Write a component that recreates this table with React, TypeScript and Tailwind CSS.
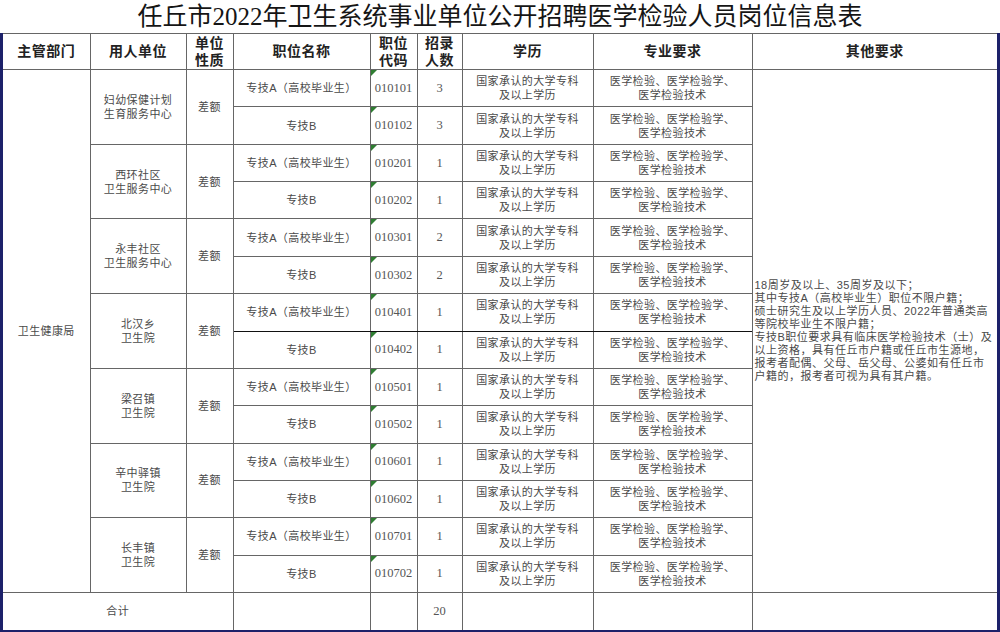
import React from 'react';

type Unit = {
  name: string[];
  codes: string[];
  nums: number[];
};

const units: Unit[] = [
  { name: ['妇幼保健计划', '生育服务中心'], codes: ['010101', '010102'], nums: [3, 3] },
  { name: ['西环社区', '卫生服务中心'], codes: ['010201', '010202'], nums: [1, 1] },
  { name: ['永丰社区', '卫生服务中心'], codes: ['010301', '010302'], nums: [2, 2] },
  { name: ['北汉乡', '卫生院'], codes: ['010401', '010402'], nums: [1, 1] },
  { name: ['梁召镇', '卫生院'], codes: ['010501', '010502'], nums: [1, 1] },
  { name: ['辛中驿镇', '卫生院'], codes: ['010601', '010602'], nums: [1, 1] },
  { name: ['长丰镇', '卫生院'], codes: ['010701', '010702'], nums: [1, 1] },
];

const other = [
  '18周岁及以上、35周岁及以下；',
  '其中专技A（高校毕业生）职位不限户籍；',
  '硕士研究生及以上学历人员、2022年普通类高',
  '等院校毕业生不限户籍；',
  '专技B职位要求具有临床医学检验技术（士）及',
  '以上资格，具有任丘市户籍或任丘市生源地，',
  '报考者配偶、父母、岳父母、公婆如有任丘市',
  '户籍的，报考者可视为具有其户籍。',
];

const cell = 'border border-[#666] text-center align-middle p-0';
const body = 'text-[11px] leading-[14px] tracking-[0.4px] text-[#4a4a4a]';
const num = "font-['Liberation_Serif',serif] text-[12.5px] text-[#555]";

function Flag() {
  return (
    <svg className="absolute left-0 top-0" width="6" height="6" viewBox="0 0 6 6">
      <polygon points="0,0 6,0 0,6" fill="#2f7d32" />
    </svg>
  );
}

function Lines({ items }: { items: string[] }) {
  return (
    <>
      {items.map((t) => (
        <div key={t}>{t}</div>
      ))}
    </>
  );
}

export default function App() {
  return (
    <div className="w-[1000px] h-[632px] bg-white overflow-hidden font-['Liberation_Sans','Noto_Sans_CJK_SC',sans-serif]">
      <div className="h-[33px] flex items-center justify-center text-[25px] leading-none text-[#151515] font-['Liberation_Serif','Noto_Sans_CJK_SC',serif]">
        任丘市2022年卫生系统事业单位公开招聘医学检验人员岗位信息表
      </div>
      <div className="border-x-[3px] border-b-2 border-[#1d216a]">
        <table className="w-[994px] table-fixed border-collapse">
          <colgroup>
            <col className="w-[87px]" />
            <col className="w-[96px]" />
            <col className="w-[47px]" />
            <col className="w-[137px]" />
            <col className="w-[47px]" />
            <col className="w-[45px]" />
            <col className="w-[131px]" />
            <col className="w-[159px]" />
            <col className="w-[245px]" />
          </colgroup>
          <thead>
            <tr className="h-[36px] text-[14px] leading-[17px] font-bold text-[#222] tracking-[0.5px]">
              <th className={`${cell} border-l-0`}>主管部门</th>
              <th className={cell}>用人单位</th>
              <th className={cell}>
                单位
                <br />
                性质
              </th>
              <th className={cell}>职位名称</th>
              <th className={cell}>
                职位
                <br />
                代码
              </th>
              <th className={cell}>
                招录
                <br />
                人数
              </th>
              <th className={cell}>学历</th>
              <th className={cell}>专业要求</th>
              <th className={`${cell} border-r-0`}>其他要求</th>
            </tr>
          </thead>
          <tbody>
            {units.map((u, i) => {
              const dark = i === 3 ? 'border-b-[#111]' : '';
              return (
                <React.Fragment key={u.codes[0]}>
                  <tr className="h-[37.36px]">
                    {i === 0 && (
                      <td rowSpan={14} className={`${cell} ${body} border-l-0`}>
                        卫生健康局
                      </td>
                    )}
                    <td rowSpan={2} className={`${cell} ${body}`}>
                      <Lines items={u.name} />
                    </td>
                    <td rowSpan={2} className={`${cell} ${body}`}>
                      差额
                    </td>
                    <td className={`${cell} ${body} ${dark}`}>专技A（高校毕业生）</td>
                    <td className={`${cell} ${num} ${dark} relative`}>
                      <Flag />
                      {u.codes[0]}
                    </td>
                    <td className={`${cell} ${num} ${dark}`}>{u.nums[0]}</td>
                    <td className={`${cell} ${body} ${dark}`}>
                      <Lines items={['国家承认的大学专科', '及以上学历']} />
                    </td>
                    <td className={`${cell} ${body} ${dark}`}>
                      <Lines items={['医学检验、医学检验学、', '医学检验技术']} />
                    </td>
                    {i === 0 && (
                      <td rowSpan={14} className={`${cell} border-r-0 text-left`}>
                        <div className="pl-[2px] text-[11px] leading-[13px] tracking-[0.5px] text-[#4a4a4a] whitespace-nowrap">
                          <Lines items={other} />
                        </div>
                      </td>
                    )}
                  </tr>
                  <tr className="h-[37.36px]">
                    <td className={`${cell} ${body}`}>专技B</td>
                    <td className={`${cell} ${num} relative`}>
                      <Flag />
                      {u.codes[1]}
                    </td>
                    <td className={`${cell} ${num}`}>{u.nums[1]}</td>
                    <td className={`${cell} ${body}`}>
                      <Lines items={['国家承认的大学专科', '及以上学历']} />
                    </td>
                    <td className={`${cell} ${body}`}>
                      <Lines items={['医学检验、医学检验学、', '医学检验技术']} />
                    </td>
                  </tr>
                </React.Fragment>
              );
            })}
            <tr className="h-[37px]">
              <td colSpan={3} className={`${cell} ${body} border-l-0 border-b-0`}>
                合计
              </td>
              <td className={`${cell} border-b-0`} />
              <td className={`${cell} border-b-0`} />
              <td className={`${cell} ${num} border-b-0`}>20</td>
              <td className={`${cell} border-b-0`} />
              <td className={`${cell} border-b-0`} />
              <td className={`${cell} border-b-0 border-r-0`} />
            </tr>
          </tbody>
        </table>
      </div>
    </div>
  );
}
